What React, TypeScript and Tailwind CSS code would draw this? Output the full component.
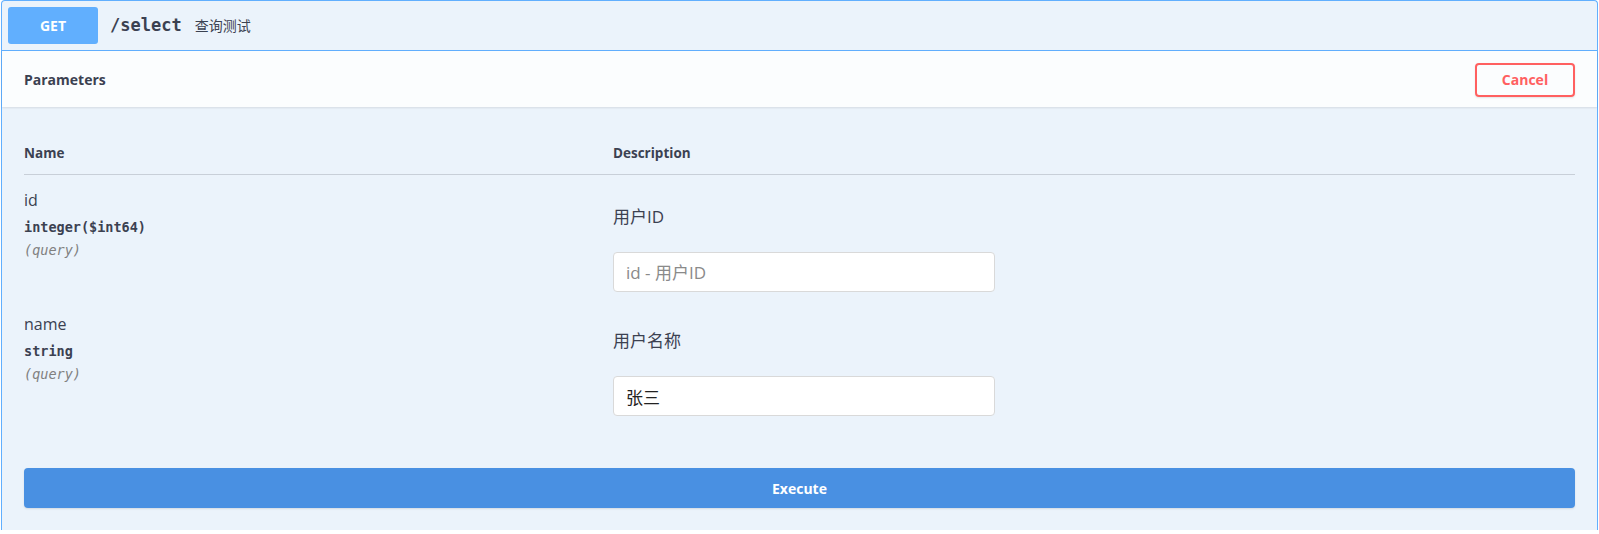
import React from "react";

const sans = "font-['Open_Sans','Noto_Sans_CJK_SC',sans-serif]";
const mono = "font-['DejaVu_Sans_Mono','Liberation_Mono',monospace]";

type Param = {
  name: string;
  type: string;
  desc: string;
  value: string;
  placeholder: string;
};

const params: Param[] = [
  { name: "id", type: "integer($int64)", desc: "用户ID", value: "", placeholder: "id - 用户ID" },
  { name: "name", type: "string", desc: "用户名称", value: "张三", placeholder: "name - 用户名称" },
];

const ParamRow: React.FC<{ p: Param }> = ({ p }) => (
  <div className="flex pb-[7px]">
    <div className="w-[589px] shrink-0 pt-[13px]">
      <div className={`${sans} h-[24px] text-[16px] leading-[24px] text-[#3b4151]`}>{p.name}</div>
      <div className={`${mono} mt-[6px] h-[18px] text-[13.5px] font-bold leading-[18px] text-[#3b4151]`}>
        {p.type}
      </div>
      <div className={`${mono} mt-[5px] h-[18px] text-[13.5px] italic leading-[18px] text-[#808080]`}>
        (query)
      </div>
    </div>
    <div className="flex-1 pt-[30px]">
      <div className={`${sans} h-[24px] text-[17px] leading-[24px] text-[#3b4151]`}>{p.desc}</div>
      <input
        defaultValue={p.value}
        placeholder={p.placeholder}
        className={`${sans} mt-[23px] h-[40px] w-[382px] rounded-[4px] border border-[#d9d9d9] bg-white px-[12px] text-[17px] text-[#222] outline-none placeholder:text-[#8a8a8a]`}
      />
    </div>
  </div>
);

export default function App() {
  return (
    <div className="h-[534px] w-full bg-white">
      <div className="ml-px w-[1597px] rounded-t-[4px] border-x border-t border-[#61affe] bg-[#ebf3fb]">
        {/* summary */}
        <div className="flex items-center border-b border-[#61affe] pb-[6px] pl-[6px] pt-[6px]">
          <div
            className={`${sans} flex h-[37px] w-[90px] items-center justify-center rounded-[3px] bg-[#61affe] text-[14px] font-bold text-white`}
          >
            GET
          </div>
          <span className={`${mono} ml-[12px] text-[17px] font-bold text-[#3b4151]`}>/select</span>
          <span className={`${sans} ml-[13px] text-[14px] text-[#3b4151]`}>查询测试</span>
        </div>

        {/* parameters header */}
        <div className="flex h-[56px] items-center justify-between bg-white/80 px-[22px] shadow-[0_1px_2px_rgba(0,0,0,0.1)]">
          <h4 className={`${sans} text-[14px] font-bold text-[#3b4151]`}>Parameters</h4>
          <button
            className={`${sans} mt-[1px] h-[34px] w-[100px] rounded-[4px] border-2 border-[#ff6060] bg-transparent text-[14px] font-bold text-[#ff6060] shadow-[0_1px_2px_rgba(0,0,0,0.1)]`}
          >
            Cancel
          </button>
        </div>

        {/* table */}
        <div className="px-[22px] pt-[25px]">
          <div className={`${sans} flex h-[43px] items-center border-b border-[#3b4151]/20 text-[13.5px] font-bold text-[#3b4151]`}>
            <div className="w-[589px]">Name</div>
            <div>Description</div>
          </div>
          {params.map((p) => (
            <ParamRow key={p.name} p={p} />
          ))}
          <button
            className={`${sans} mt-[45px] h-[40px] w-full rounded-[4px] bg-[#4990e2] text-[14px] font-bold text-white shadow-[0_1px_2px_rgba(0,0,0,0.1)]`}
          >
            Execute
          </button>
          <div className="h-[22px]" />
        </div>
      </div>
    </div>
  );
}
